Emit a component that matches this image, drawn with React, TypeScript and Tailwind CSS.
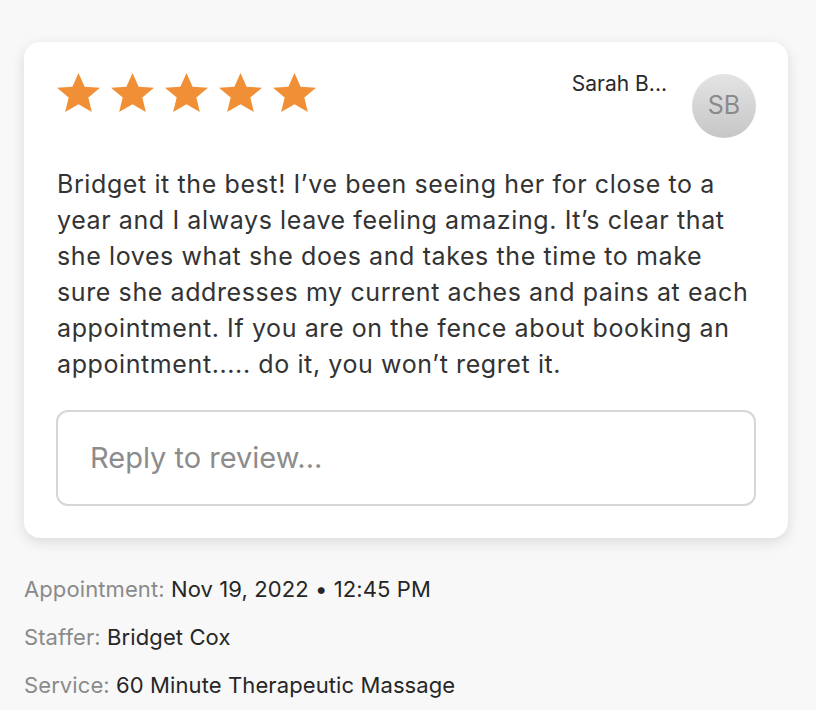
import React from "react";

const Star = () => (
  <svg viewBox="1.25 1.6 21.5 20.3" className="h-[39px] w-[43px]" preserveAspectRatio="none">
    <path
      d="M12 1.6l3.05 7.1 7.7.62-5.85 5.05 1.78 7.53L12 17.9l-6.68 4l1.78-7.53L1.25 9.32l7.7-.62z"
      fill="#f08f36"
    />
  </svg>
);

const Detail = ({ label, value }: { label: string; value: string }) => (
  <p className="text-[22px] leading-[48px] tracking-[0.1px]">
    <span className="text-[#8a8a8a]">{label}</span>{" "}
    <span className="text-[#262626]">{value}</span>
  </p>
);

export default function App() {
  return (
    <div className="min-h-[710px] bg-[#f8f8f8] pl-6 pr-7 pt-[42px] font-['Inter',sans-serif]">
      <article className="rounded-[16px] bg-white pl-[33px] pr-8 pb-8 pt-[31px] shadow-[0_4px_14px_rgba(0,0,0,0.12)]">
        <div className="flex items-start justify-between">
          <div className="flex gap-[11px]">
            {[0, 1, 2, 3, 4].map((i) => (
              <Star key={i} />
            ))}
          </div>
          <div className="-mt-[6px] flex items-start gap-[25px]">
            <span className="mt-[1px] text-[21px] text-[#2a2a2a]">Sarah B...</span>
            <div className="mt-[7px] flex h-16 w-16 items-center justify-center rounded-full bg-gradient-to-b from-[#e4e4e4] to-[#c6c6c6] text-[25px] text-[#8a8a8a]">
              SB
            </div>
          </div>
        </div>
        <p className="mt-[28px] text-[25px] leading-[36px] tracking-[0.6px] text-[#333]">
          Bridget it the best! I’ve been seeing her for close to a year and I
          always leave feeling amazing. It’s clear that she loves what she does
          and takes the time to make sure she addresses my current aches and
          pains at each appointment. If you are on the fence about booking an
          appointment..... do it, you won’t regret it.
        </p>
        <div className="-ml-px mt-[28px] flex h-24 items-center rounded-xl border-2 border-[#d6d6d6] px-8 text-[29px] text-[#8c8c8c]">
          Reply to review...
        </div>
      </article>
      <div className="mt-[27px]">
        <Detail label="Appointment:" value="Nov 19, 2022 • 12:45 PM" />
        <Detail label="Staffer:" value="Bridget Cox" />
        <Detail label="Service:" value="60 Minute Therapeutic Massage" />
      </div>
    </div>
  );
}
